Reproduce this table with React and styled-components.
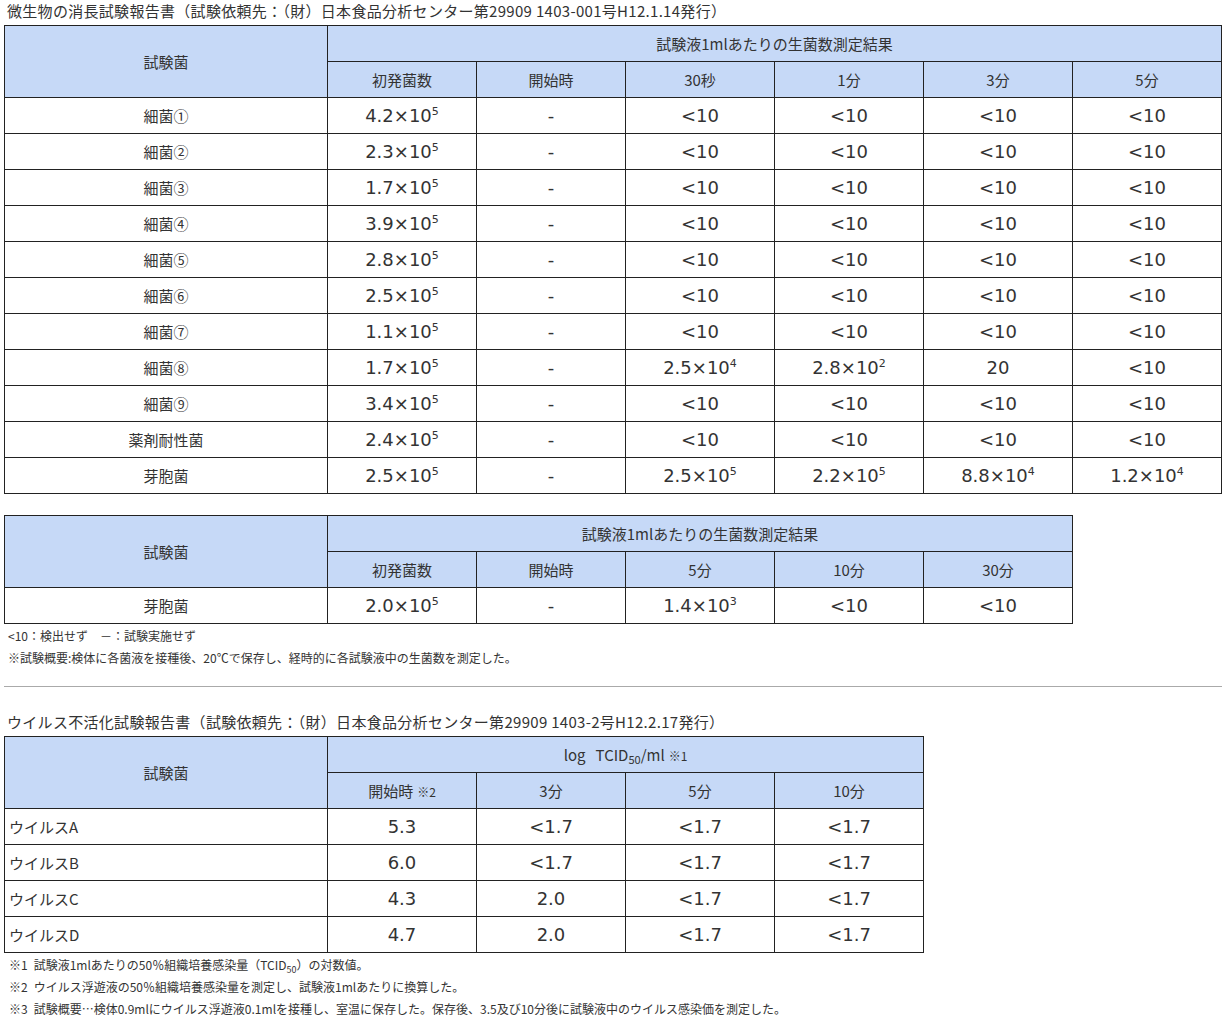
import React from 'react'
import styled, {createGlobalStyle} from "styled-components";

const GlobalStyle = createGlobalStyle`
  body {
    margin: 0;
    background: #fff;
    color: #333;
    font-family: "Noto Sans CJK JP", "DejaVu Sans", sans-serif;
  }
`;

const Page = styled.div`
  padding: 0 4px;
  width: 1218px;
`;

const Caption = styled.div`
  font-size: 15px;
  line-height: 22px;
  letter-spacing: 0.3px;
  padding: 0 0 3px 3px;
  white-space: nowrap;
`;

const Table = styled.table`
  border-collapse: collapse;
  table-layout: fixed;
  width: ${props => props.width}px;
  margin-bottom: ${props => props.gap || 0}px;
`;

const Head = styled.th`
  background: #c6d9f7;
  border: 1px solid #222;
  font-weight: normal;
  font-size: 15px;
  height: 35px;
  padding: 0;
  color: #333;
  text-align: center;
  white-space: nowrap;
`;

const Cell = styled.td`
  border: 1px solid #222;
  height: 35px;
  padding: ${props => props.left ? "0 0 0 4px" : "0"};
  text-align: ${props => props.left ? "left" : "center"};
  font-size: ${props => props.label ? "15px" : "18px"};
  font-family: ${props => props.label ? '"Noto Sans CJK JP", sans-serif' : '"DejaVu Sans", "Noto Sans CJK JP", sans-serif'};
  color: #333;
  white-space: nowrap;
`;

const Sup = styled.sup`
  font-size: 11px;
  vertical-align: 7px;
  line-height: 0;
`;

const Sub = styled.sub`
  font-size: ${props => props.small ? 9 : 11}px;
  vertical-align: -3px;
  line-height: 0;
`;

const Mark = styled.span`
  font-size: 12px;
  margin-left: 4px;
`;

const Note = styled.div`
  font-size: 12px;
  line-height: ${props => props.lh || 23}px;
  padding-left: ${props => props.indent || 4}px;
  white-space: nowrap;
`;

const Divider = styled.hr`
  border: none;
  border-top: 1px solid #aaa;
  margin: 17px 0 24px;
  width: 1218px;
`;

const Exp = ({b, e}) => <>{b}×10<Sup>{e}</Sup></>;

const bacteria = [
  ["細菌①", [4.2, 5], ["<10", "<10", "<10", "<10"]],
  ["細菌②", [2.3, 5], ["<10", "<10", "<10", "<10"]],
  ["細菌③", [1.7, 5], ["<10", "<10", "<10", "<10"]],
  ["細菌④", [3.9, 5], ["<10", "<10", "<10", "<10"]],
  ["細菌⑤", [2.8, 5], ["<10", "<10", "<10", "<10"]],
  ["細菌⑥", [2.5, 5], ["<10", "<10", "<10", "<10"]],
  ["細菌⑦", [1.1, 5], ["<10", "<10", "<10", "<10"]],
  ["細菌⑧", [1.7, 5], [["2.5", 4], ["2.8", 2], "20", "<10"]],
  ["細菌⑨", [3.4, 5], ["<10", "<10", "<10", "<10"]],
  ["薬剤耐性菌", [2.4, 5], ["<10", "<10", "<10", "<10"]],
  ["芽胞菌", [2.5, 5], [["2.5", 5], ["2.2", 5], ["8.8", 4], ["1.2", 4]]],
];

const viruses = [
  ["ウイルスA", "5.3", "<1.7", "<1.7", "<1.7"],
  ["ウイルスB", "6.0", "<1.7", "<1.7", "<1.7"],
  ["ウイルスC", "4.3", "2.0", "<1.7", "<1.7"],
  ["ウイルスD", "4.7", "2.0", "<1.7", "<1.7"],
];

const Value = ({v}) => Array.isArray(v) ? <Exp b={v[0]} e={v[1]}/> : v;

const Cols = ({n}) => (
  <colgroup>
    <col style={{width: 323}}/>
    {Array.from({length: n}).map((_, i) => <col key={i} style={{width: 149}}/>)}
  </colgroup>
);

export default function App() {
  return (
    <Page>
      <GlobalStyle/>
      <Caption>微生物の消長試験報告書（試験依頼先：（財）日本食品分析センター第29909 1403-001号H12.1.14発行）</Caption>
      <Table width={1218} gap={21}>
        <Cols n={6}/>
        <thead>
          <tr>
            <Head rowSpan={2}>試験菌</Head>
            <Head colSpan={6}>試験液1mlあたりの生菌数測定結果</Head>
          </tr>
          <tr>
            {["初発菌数", "開始時", "30秒", "1分", "3分", "5分"].map(h => <Head key={h}>{h}</Head>)}
          </tr>
        </thead>
        <tbody>
          {bacteria.map(([name, init, vals]) => (
            <tr key={name}>
              <Cell label>{name}</Cell>
              <Cell><Exp b={init[0].toFixed(1)} e={init[1]}/></Cell>
              <Cell>-</Cell>
              {vals.map((v, i) => <Cell key={i}><Value v={v}/></Cell>)}
            </tr>
          ))}
        </tbody>
      </Table>

      <Table width={1069}>
        <Cols n={5}/>
        <thead>
          <tr>
            <Head rowSpan={2}>試験菌</Head>
            <Head colSpan={5}>試験液1mlあたりの生菌数測定結果</Head>
          </tr>
          <tr>
            {["初発菌数", "開始時", "5分", "10分", "30分"].map(h => <Head key={h}>{h}</Head>)}
          </tr>
        </thead>
        <tbody>
          <tr>
            <Cell label>芽胞菌</Cell>
            <Cell><Exp b="2.0" e={5}/></Cell>
            <Cell>-</Cell>
            <Cell><Exp b="1.4" e={3}/></Cell>
            <Cell>&lt;10</Cell>
            <Cell>&lt;10</Cell>
          </tr>
        </tbody>
      </Table>
      <Note>&lt;10：検出せず　－：試験実施せず</Note>
      <Note lh={22}>※試験概要:検体に各菌液を接種後、20℃で保存し、経時的に各試験液中の生菌数を測定した。</Note>

      <Divider/>

      <Caption>ウイルス不活化試験報告書（試験依頼先：（財）日本食品分析センター第29909 1403-2号H12.2.17発行）</Caption>
      <Table width={920}>
        <Cols n={4}/>
        <thead>
          <tr>
            <Head rowSpan={2}>試験菌</Head>
            <Head colSpan={4}>log&nbsp;&nbsp;&nbsp;TCID<Sub>50</Sub>/ml<Mark>※1</Mark></Head>
          </tr>
          <tr>
            <Head>開始時<Mark>※2</Mark></Head>
            {["3分", "5分", "10分"].map(h => <Head key={h}>{h}</Head>)}
          </tr>
        </thead>
        <tbody>
          {viruses.map(([name, ...vals]) => (
            <tr key={name}>
              <Cell label left>{name}</Cell>
              {vals.map((v, i) => <Cell key={i}>{v}</Cell>)}
            </tr>
          ))}
        </tbody>
      </Table>
      <Note lh={23} indent={5}>※1{"\u2002"}試験液1mlあたりの50％組織培養感染量（TCID<Sub small>50</Sub>）の対数値。</Note>
      <Note lh={21} indent={5}>※2{"\u2002"}ウイルス浮遊液の50％組織培養感染量を測定し、試験液1mlあたりに換算した。</Note>
      <Note lh={23} indent={5}>※3{"\u2002"}試験概要…検体0.9mlにウイルス浮遊液0.1mlを接種し、室温に保存した。保存後、3.5及び10分後に試験液中のウイルス感染価を測定した。</Note>
    </Page>
  );
}
